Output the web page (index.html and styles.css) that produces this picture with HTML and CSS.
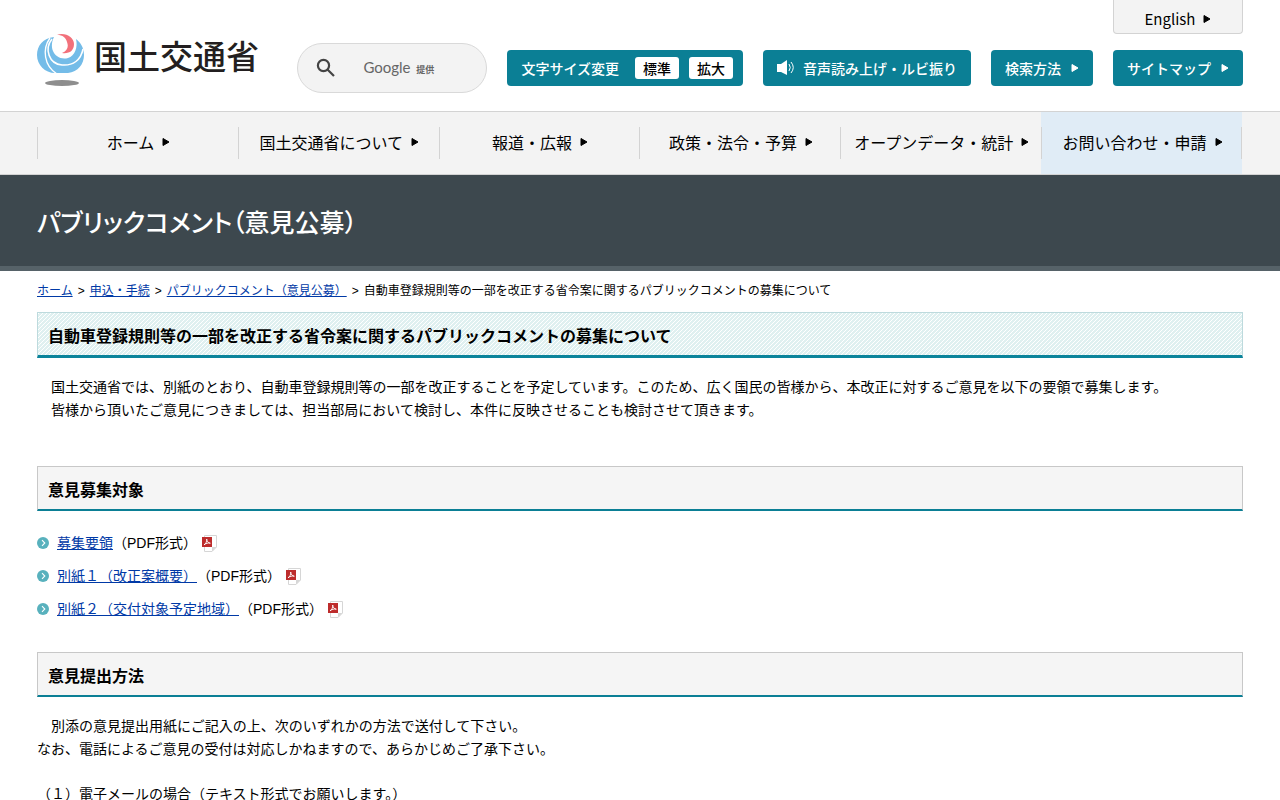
FILE: index.html
```html
<!DOCTYPE html>
<html lang="ja">
<head>
  <meta charset="UTF-8">
  <meta name="viewport" content="width=device-width, initial-scale=1.0">
  <title>パブリックコメント（意見公募） - 国土交通省</title>
  <link rel="stylesheet" href="styles.css">
</head>
<body>
  <!-- Shared icons -->
  <svg class="sprite" aria-hidden="true">
    <symbol id="arrow" viewBox="0 0 8 8"><path d="M1 0.5 L7 4 L1 7.5 Z" fill="currentColor" stroke="currentColor" stroke-linejoin="round"/></symbol>
    <symbol id="bullet" viewBox="0 0 12 12">
      <circle cx="6" cy="6" r="6" fill="#58b1bd"/>
      <path d="M5 3.2 L7.8 6 L5 8.8" fill="none" stroke="#fff" stroke-width="1.1"/>
    </symbol>
    <symbol id="pdf" viewBox="0 0 15 17">
      <path d="M2.5 0.5 H14.5 V12 L10 16.5 H2.5 Z" fill="#fff" stroke="#d6d6d6"/>
      <path d="M14.5 12 L10 16.5 V12 Z" fill="#d6d6d6"/>
      <rect y="2" width="10" height="10" fill="#bd2c2c"/>
      <path d="M2 9.8 C3.7 9 5 6.5 4.7 4 C4.8 6.3 6.3 8 8.3 8.2 C6 7.7 4 8.3 2 9.8 Z" fill="none" stroke="#fff" stroke-width="0.9"/>
    </symbol>
  </svg>

  <header class="header">
    <a href="#" class="logo">
      <svg class="logo-mark" viewBox="0 0 48 52" aria-hidden="true">
        <path d="M17 3 C6 4 0 12 0 21 C0 31 8 39 18 39 L31 39 C41 38 47 30 47 21 C47 13 43 8 39 5 C41 13 38 22 31 24 C24 26 18 22 16 17 C14 12 15 7 17 3 Z" fill="#74bce8"/>
        <path d="M13 4 C5 15 7 32 20 40" fill="none" stroke="#fff" stroke-width="1.3"/>
        <path d="M15 5 C7 15 12 30 25 31 C36 32 44 26 46 15" fill="none" stroke="#fff" stroke-width="1.5"/>
        <circle cx="27" cy="11" r="10" fill="#fff"/>
        <path d="M20 0.8 C29 -2 37 4 37 10 C37 17 32 20 25 19 C30 17 32 13 30 8 C29 4 26 1 20 0.8 Z" fill="#f2717b"/>
        <ellipse cx="25" cy="49" rx="17" ry="3" fill="#8e8e8e"/>
      </svg>
      <span class="logo-text">国土交通省</span>
    </a>

    <div class="tools">
      <a href="#" class="english">English <svg class="arrow"><use href="#arrow"/></svg></a>
      <div class="tool-row">
        <form class="search">
          <button type="submit" class="search-button" aria-label="検索">
            <svg width="20" height="20" viewBox="0 0 20 20" fill="none" stroke="#444" stroke-width="2.2"><circle cx="7.5" cy="7.5" r="5.6"/><path d="M11.5 11.5 L18 18"/></svg>
          </button>
          <label class="search-brand" for="q">Google <small>提供</small></label>
          <input type="text" id="q" class="search-input">
        </form>
        <div class="tool font-size">
          文字サイズ変更
          <button type="button">標準</button>
          <button type="button">拡大</button>
        </div>
        <a href="#" class="tool voice">
          <svg width="18" height="16" viewBox="0 0 18 16" aria-hidden="true">
            <path d="M0 4 H4 L10 0 V15 L4 12 H0 Z" fill="#fff"/>
            <path d="M12 4 Q14.5 7.5 12 11 M14 2 Q18.5 7.5 14 13" fill="none" stroke="#fff"/>
          </svg>
          音声読み上げ・ルビ振り
        </a>
        <a href="#" class="tool">検索方法 <svg class="arrow"><use href="#arrow"/></svg></a>
        <a href="#" class="tool">サイトマップ <svg class="arrow"><use href="#arrow"/></svg></a>
      </div>
    </div>
  </header>

  <nav class="gnav">
    <ul>
      <li><a href="#">ホーム <svg class="arrow"><use href="#arrow"/></svg></a></li>
      <li><a href="#">国土交通省について <svg class="arrow"><use href="#arrow"/></svg></a></li>
      <li><a href="#">報道・広報 <svg class="arrow"><use href="#arrow"/></svg></a></li>
      <li><a href="#">政策・法令・予算 <svg class="arrow"><use href="#arrow"/></svg></a></li>
      <li><a href="#">オープンデータ・統計 <svg class="arrow"><use href="#arrow"/></svg></a></li>
      <li class="current"><a href="#">お問い合わせ・申請 <svg class="arrow"><use href="#arrow"/></svg></a></li>
    </ul>
  </nav>

  <div class="page-title">パブリックコメント（意見公募）</div>

  <main class="contents">
    <div class="breadcrumb">
      <a href="#">ホーム</a><span>&gt;</span><a href="#">申込・手続</a><span>&gt;</span><a href="#">パブリックコメント（意見公募）</a><span>&gt;</span>自動車登録規則等の一部を改正する省令案に関するパブリックコメントの募集について
    </div>

    <h1>自動車登録規則等の一部を改正する省令案に関するパブリックコメントの募集について</h1>
    <p class="lead">　国土交通省では、別紙のとおり、自動車登録規則等の一部を改正することを予定しています。このため、広く国民の皆様から、本改正に対するご意見を以下の要領で募集します。<br>
    　皆様から頂いたご意見につきましては、担当部局において検討し、本件に反映させることも検討させて頂きます。</p>

    <h2>意見募集対象</h2>
    <ul class="links">
      <li><svg class="bullet"><use href="#bullet"/></svg><a href="#">募集要領</a>（PDF形式）<svg class="pdf"><use href="#pdf"/></svg></li>
      <li><svg class="bullet"><use href="#bullet"/></svg><a href="#">別紙１（改正案概要）</a>（PDF形式）<svg class="pdf"><use href="#pdf"/></svg></li>
      <li><svg class="bullet"><use href="#bullet"/></svg><a href="#">別紙２（交付対象予定地域）</a>（PDF形式）<svg class="pdf"><use href="#pdf"/></svg></li>
    </ul>

    <h2>意見提出方法</h2>
    <p>　別添の意見提出用紙にご記入の上、次のいずれかの方法で送付して下さい。<br>
    なお、電話によるご意見の受付は対応しかねますので、あらかじめご了承下さい。</p>
    <p>（１）電子メールの場合（テキスト形式でお願いします。）</p>
  </main>
</body>
</html>
```
FILE: styles.css
```css
* {
  box-sizing: border-box;
}
body {
  margin: 0;
  font-family: "Liberation Sans", "Noto Sans CJK JP", sans-serif;
  font-size: 14px;
  line-height: 22px;
  color: #000;
  background: #fff;
}
ul {
  margin: 0;
  padding: 0;
  list-style: none;
}
a {
  color: #0039a6;
}
button {
  font: inherit;
  border: 0;
  cursor: pointer;
}
.sprite {
  display: none;
}
.arrow {
  width: 8px;
  height: 8px;
  flex: none;
}

/* Header */
.header {
  display: flex;
  justify-content: space-between;
  padding: 0 37px;
  font-family: "Noto Sans CJK JP", sans-serif;
}
.logo {
  display: flex;
  gap: 9px;
  padding-top: 34px;
  color: #231f20;
  text-decoration: none;
}
.logo-mark {
  width: 48px;
  height: 52px;
}
.logo-text {
  font-size: 33px;
  font-weight: 500;
  line-height: 42px;
  white-space: nowrap;
}
.tools {
  display: flex;
  flex-direction: column;
  align-items: flex-end;
}
.english {
  display: flex;
  align-items: center;
  justify-content: center;
  gap: 8px;
  width: 130px;
  height: 34px;
  padding-top: 4px;
  border: 1px solid #d3d3d3;
  border-top: 0;
  border-radius: 0 0 4px 4px;
  background: #f3f3f3;
  color: #000;
  font-size: 15px;
  text-decoration: none;
}
.tool-row {
  display: flex;
  align-items: center;
  gap: 20px;
  margin: 9px 0 18px;
}
.search {
  display: grid;
  grid-template-columns: 56px 1fr;
  align-items: center;
  width: 190px;
  height: 50px;
  border: 1px solid #d9d9d9;
  border-radius: 25px;
  background: #f3f3f3;
}
.search-button {
  display: flex;
  padding: 0 0 0 18px;
  background: none;
}
.search-brand,
.search-input {
  grid-area: 1 / 2;
}
.search-brand {
  padding-left: 9px;
  font-family: Lato, "Noto Sans CJK JP", sans-serif;
  font-size: 15px;
  color: #666;
}
.search-brand small {
  margin-left: 2px;
  font-size: 9px;
  font-weight: bold;
}
.search-input {
  width: 100%;
  height: 40px;
  border: 0;
  outline: 0;
  background: transparent;
}
.tool {
  display: flex;
  align-items: center;
  gap: 10px;
  height: 36px;
  padding: 0 14px;
  border-radius: 4px;
  background: #0b7f95;
  color: #fff;
  font-weight: 500;
  text-decoration: none;
  white-space: nowrap;
}
.tool.voice {
  gap: 8px;
}
.font-size {
  padding-right: 10px;
}
.font-size button {
  height: 22px;
  padding: 0 8px;
  border-radius: 3px;
  background: #fff;
  color: #000;
}
.font-size button:first-of-type {
  margin-left: 6px;
}

/* Global navigation */
.gnav {
  padding: 0 38px 0 37px;
  border-top: 1px solid #d3d3d3;
  border-bottom: 1px solid #d3d3d3;
  background: #f3f3f3;
  font-family: "Noto Sans CJK JP", sans-serif;
}
.gnav ul {
  display: grid;
  grid-template-columns: repeat(6, 1fr);
}
.gnav li {
  background: linear-gradient(#d3d3d3, #d3d3d3) left center / 1px 32px no-repeat;
}
.gnav .current {
  background:
    linear-gradient(#d3d3d3, #d3d3d3) left center / 1px 32px no-repeat,
    linear-gradient(#d3d3d3, #d3d3d3) right center / 1px 32px no-repeat,
    #e0ecf6;
}
.gnav a {
  display: flex;
  align-items: center;
  justify-content: center;
  gap: 8px;
  height: 62px;
  padding: 0 0 2px 2px;
  font-size: 16px;
  color: #000;
  text-decoration: none;
  white-space: nowrap;
}
.page-title {
  padding: 28px 37px 27px;
  border-bottom: 5px solid #566268;
  background: #3d484e;
  color: #fff;
  font-family: "Noto Sans CJK JP", sans-serif;
  font-size: 25px;
  font-weight: 500;
  line-height: 36px;
  font-feature-settings: "palt";
}

/* Contents */
.contents {
  padding: 9px 37px 40px;
}
.breadcrumb {
  margin-bottom: 10px;
  font-size: 12px;
}
.breadcrumb span {
  margin: 0 5px;
}
h1,
h2 {
  margin: 0;
  padding: 13px 10px 7px;
  border: 1px solid #c8c8c8;
  border-bottom: 2px solid #0b7f95;
  background: #f5f5f5;
  font-size: 16px;
  line-height: 22px;
}
h1 {
  border-color: #bddadd;
  border-bottom: 3px solid #0b849b;
  background: linear-gradient(135deg, #fff 18%, #dff0f0 18% 56%, #fff 56% 68%, #dff0f0 68%) 0 0 / 4px 4px;
}
p {
  margin: 18px 0 22px;
  line-height: 23px;
}
.lead {
  margin-bottom: 44px;
}
.links {
  margin: 21px 0 32px;
}
.links li {
  display: flex;
  align-items: center;
  margin-bottom: 11px;
}
.bullet {
  width: 12px;
  height: 12px;
  margin-right: 8px;
}
.pdf {
  width: 15px;
  height: 17px;
  margin-left: 5px;
}
```
